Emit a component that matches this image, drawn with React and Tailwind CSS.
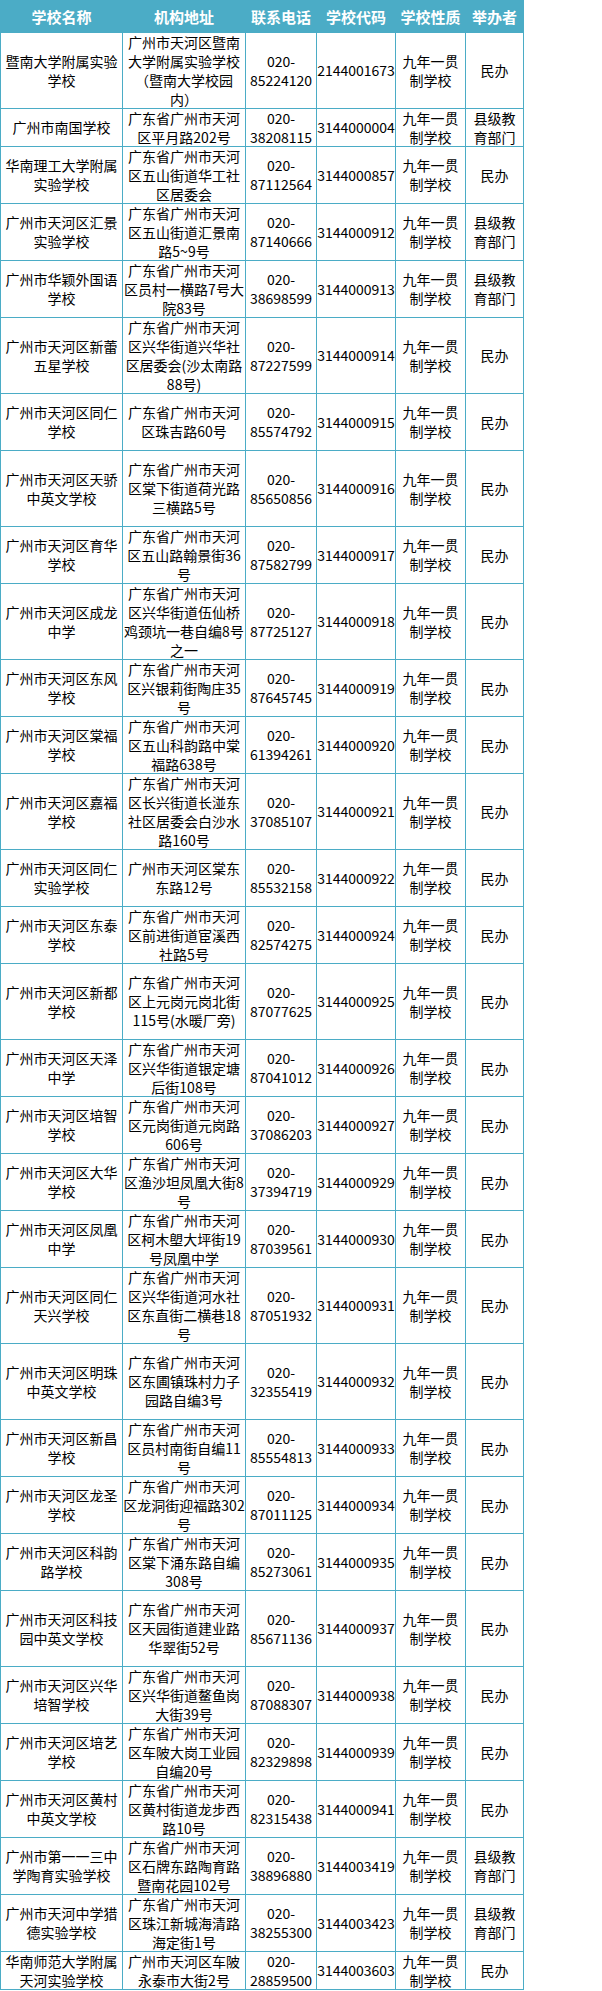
import React from 'react'

// name | address lines (|) | phone | code | sponsor | height units (19px each)
const rows = [
  ['暨南大学附属实验|学校', '广州市天河区暨南|大学附属实验学校|（暨南大学校园|内）', '85224120', '2144001673', '民办', 4],
  ['广州市南国学校', '广东省广州市天河|区平月路202号', '38208115', '3144000004', '县级教|育部门', 2],
  ['华南理工大学附属|实验学校', '广东省广州市天河|区五山街道华工社|区居委会', '87112564', '3144000857', '民办', 3],
  ['广州市天河区汇景|实验学校', '广东省广州市天河|区五山街道汇景南|路5~9号', '87140666', '3144000912', '县级教|育部门', 3],
  ['广州市华颖外国语|学校', '广东省广州市天河|区员村一横路7号大|院83号', '38698599', '3144000913', '县级教|育部门', 3],
  ['广州市天河区新蕾|五星学校', '广东省广州市天河|区兴华街道兴华社|区居委会(沙太南路|88号)', '87227599', '3144000914', '民办', 4],
  ['广州市天河区同仁|学校', '广东省广州市天河|区珠吉路60号', '85574792', '3144000915', '民办', 3],
  ['广州市天河区天骄|中英文学校', '广东省广州市天河|区棠下街道荷光路|三横路5号', '85650856', '3144000916', '民办', 4],
  ['广州市天河区育华|学校', '广东省广州市天河|区五山路翰景街36|号', '87582799', '3144000917', '民办', 3],
  ['广州市天河区成龙|中学', '广东省广州市天河|区兴华街道伍仙桥|鸡颈坑一巷自编8号|之一', '87725127', '3144000918', '民办', 4],
  ['广州市天河区东风|学校', '广东省广州市天河|区兴银莉街陶庄35|号', '87645745', '3144000919', '民办', 3],
  ['广州市天河区棠福|学校', '广东省广州市天河|区五山科韵路中棠|福路638号', '61394261', '3144000920', '民办', 3],
  ['广州市天河区嘉福|学校', '广东省广州市天河|区长兴街道长湴东|社区居委会白沙水|路160号', '37085107', '3144000921', '民办', 4],
  ['广州市天河区同仁|实验学校', '广州市天河区棠东|东路12号', '85532158', '3144000922', '民办', 3],
  ['广州市天河区东泰|学校', '广东省广州市天河|区前进街道宦溪西|社路5号', '82574275', '3144000924', '民办', 3],
  ['广州市天河区新都|学校', '广东省广州市天河|区上元岗元岗北街|115号(水暖厂旁)', '87077625', '3144000925', '民办', 4],
  ['广州市天河区天泽|中学', '广东省广州市天河|区兴华街道银定塘|后街108号', '87041012', '3144000926', '民办', 3],
  ['广州市天河区培智|学校', '广东省广州市天河|区元岗街道元岗路|606号', '37086203', '3144000927', '民办', 3],
  ['广州市天河区大华|学校', '广东省广州市天河|区渔沙坦凤凰大街8|号', '37394719', '3144000929', '民办', 3],
  ['广州市天河区凤凰|中学', '广东省广州市天河|区柯木塱大坪街19|号凤凰中学', '87039561', '3144000930', '民办', 3],
  ['广州市天河区同仁|天兴学校', '广东省广州市天河|区兴华街道河水社|区东直街二横巷18|号', '87051932', '3144000931', '民办', 4],
  ['广州市天河区明珠|中英文学校', '广东省广州市天河|区东圃镇珠村力子|园路自编3号', '32355419', '3144000932', '民办', 4],
  ['广州市天河区新昌|学校', '广东省广州市天河|区员村南街自编11|号', '85554813', '3144000933', '民办', 3],
  ['广州市天河区龙圣|学校', '广东省广州市天河|区龙洞街迎福路302|号', '87011125', '3144000934', '民办', 3],
  ['广州市天河区科韵|路学校', '广东省广州市天河|区棠下涌东路自编|308号', '85273061', '3144000935', '民办', 3],
  ['广州市天河区科技|园中英文学校', '广东省广州市天河|区天园街道建业路|华翠街52号', '85671136', '3144000937', '民办', 4],
  ['广州市天河区兴华|培智学校', '广东省广州市天河|区兴华街道鳌鱼岗|大街39号', '87088307', '3144000938', '民办', 3],
  ['广州市天河区培艺|学校', '广东省广州市天河|区车陂大岗工业园|自编20号', '82329898', '3144000939', '民办', 3],
  ['广州市天河区黄村|中英文学校', '广东省广州市天河|区黄村街道龙步西|路10号', '82315438', '3144000941', '民办', 3],
  ['广州市第一一三中|学陶育实验学校', '广东省广州市天河|区石牌东路陶育路|暨南花园102号', '38896880', '3144003419', '县级教|育部门', 3],
  ['广州市天河中学猎|德实验学校', '广东省广州市天河|区珠江新城海清路|海定街1号', '38255300', '3144003423', '县级教|育部门', 3],
  ['华南师范大学附属|天河实验学校', '广州市天河区车陂|永泰市大街2号', '28859500', '3144003603', '民办', 2],
]

const heights = { 2: 'h-[38px]', 3: 'h-[57px]', 4: 'h-[76px]' }

function Cell({ text, h }) {
  return (
    <div className={`${h} border-r border-b border-[#4bacc6] flex flex-col items-center justify-center text-center`}>
      {text.split('|').map((l, i) => (
        <div key={i} className="whitespace-nowrap leading-[19px]">{l}</div>
      ))}
    </div>
  )
}

const headers = ['学校名称', '机构地址', '联系电话', '学校代码', '学校性质', '举办者']

export default function App() {
  return (
    <div className="w-[524px] bg-white font-['Noto_Sans_CJK_SC',sans-serif] text-[14px] leading-[19px] text-black">
      <div className="grid grid-cols-[122px_123px_71px_79px_70px_58px] border-l border-[#4bacc6]">
        {headers.map(h => (
          <div key={h} className="h-[33px] bg-[#4bacc6] border-r border-b border-[#4bacc6] flex items-center justify-center text-white font-bold text-[15px] whitespace-nowrap">
            {h}
          </div>
        ))}
        {rows.map(([name, addr, phone, code, sponsor, units]) => {
          const h = heights[units]
          return (
            <React.Fragment key={code}>
              <Cell text={name} h={h} />
              <Cell text={addr} h={h} />
              <Cell text={'020-|' + phone} h={h} />
              <Cell text={code} h={h} />
              <Cell text="九年一贯|制学校" h={h} />
              <Cell text={sponsor} h={h} />
            </React.Fragment>
          )
        })}
      </div>
    </div>
  )
}
